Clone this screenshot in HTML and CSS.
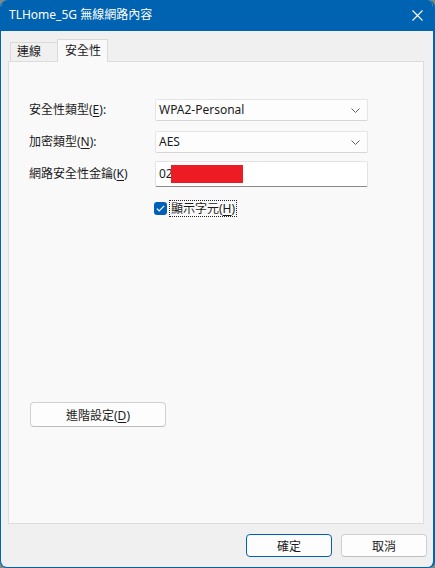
FILE: index.html
```html
<!DOCTYPE html>
<html lang="zh-Hant">
<head>
    <meta charset="UTF-8">
    <meta name="viewport" content="width=device-width, initial-scale=1.0">
    <title>TLHome_5G 無線網路內容</title>
    <link rel="stylesheet" href="styles.css">
</head>
<body>
<div class="window">
    <div class="titlebar">
        <span class="title">TLHome_5G 無線網路內容</span>
        <svg class="close" width="11" height="11" viewBox="0 0 11 11">
            <path d="M0.5 0.5 L10.5 10.5 M10.5 0.5 L0.5 10.5" stroke="#fff" stroke-width="1.1" fill="none"/>
        </svg>
    </div>

    <div class="main">
        <div class="tabs">
            <div class="tab">連線</div>
            <div class="tab active">安全性</div>
        </div>

        <div class="panel">
            <div class="row row-first">
                <label class="label">安全性類型(<u>E</u>):</label>
                <div class="select">
                    <span>WPA2-Personal</span>
                    <svg class="chevron" width="9" height="5" viewBox="0 0 9 5"><path d="M0.5 0.5 L4.5 4.5 L8.5 0.5" stroke="#5f5f5f" fill="none"/></svg>
                </div>
            </div>
            <div class="row row-second">
                <label class="label">加密類型(<u>N</u>):</label>
                <div class="select">
                    <span>AES</span>
                    <svg class="chevron" width="9" height="5" viewBox="0 0 9 5"><path d="M0.5 0.5 L4.5 4.5 L8.5 0.5" stroke="#5f5f5f" fill="none"/></svg>
                </div>
            </div>
            <div class="row row-third">
                <label class="label">網路安全性金鑰(<u>K</u>)</label>
                <div class="input">
                    <span>02</span><span class="redact"></span>
                </div>
            </div>
            <div class="check-row">
                <span class="checkbox">
                    <svg width="9" height="7" viewBox="0 0 9 7"><path d="M0.8 3.6 L3.2 5.9 L8.2 0.9" stroke="#fff" stroke-width="1.2" fill="none"/></svg>
                </span>
                <span class="check-label">顯示字元(<u>H</u>)</span>
            </div>

            <button class="btn advanced">進階設定(<u>D</u>)</button>
        </div>
    </div>

    <div class="footer">
        <button class="btn default">確定</button>
        <button class="btn">取消</button>
    </div>
</div>
</body>
</html>
```

FILE: styles.css
```css
html, body {
    margin: 0;
    padding: 0;
    background: #7f8a80;
}
body {
    font-family: "Noto Sans", "Noto Sans CJK TC", sans-serif;
    font-size: 12px;
    line-height: 16px;
    color: #1b1b1b;
}
u {
    text-decoration: underline;
    text-underline-offset: 2px;
}

.window {
    width: 435px;
    height: 568px;
    box-sizing: border-box;
    background: #f0f0f0;
    border-left: 1px solid #0063b1;
    border-right: 2px solid #0063b1;
    border-bottom: 1px solid #0063b1;
    border-radius: 7px;
    overflow: hidden;
    display: flex;
    flex-direction: column;
}

.titlebar {
    height: 31px;
    flex: none;
    background: #0063b1;
    color: #fff;
    display: flex;
    align-items: center;
    justify-content: space-between;
    padding: 0 10px 0 8px;
}
.title {
    font-size: 12px;
    margin-top: -1px;
}
.close {
    display: block;
}

.main {
    flex: 1;
    padding: 8px 9px 0 7px;
    display: flex;
    flex-direction: column;
}

.tabs {
    display: flex;
    align-items: flex-end;
    height: 22px;
    margin-left: 2px;
    position: relative;
    z-index: 1;
}
.tab {
    height: 19px;
    box-sizing: border-box;
    width: 48px;
    border: 1px solid #dadada;
    border-bottom: none;
    background: #f0f0f0;
    padding-left: 6px;
    line-height: 18px;
    font-size: 12px;
}
.tab.active {
    height: 23px;
    width: 51px;
    margin-left: -1px;
    margin-bottom: -1px;
    background: #f9f9f9;
    padding-left: 7px;
    line-height: 22px;
}

.panel {
    height: 463px;
    box-sizing: border-box;
    border: 1px solid #dcdcdc;
    background: #f9f9f9;
    padding: 37px 0 96px 20px;
    display: flex;
    flex-direction: column;
}

.row {
    display: flex;
    align-items: center;
}
.row-second {
    margin-top: 10px;
}
.row-third {
    margin-top: 8px;
}
.label {
    width: 126px;
    flex: none;
}

.select {
    width: 213px;
    height: 22px;
    box-sizing: border-box;
    background: #fdfdfd;
    border: 1px solid #e5e5e5;
    border-bottom-color: #d6d6d6;
    border-radius: 2px;
    display: flex;
    align-items: center;
    justify-content: space-between;
    padding: 0 7px 0 3px;
    font-size: 12px;
}
.chevron {
    display: block;
}

.input {
    width: 213px;
    height: 26px;
    box-sizing: border-box;
    background: #fff;
    border: 1px solid #e3e3e3;
    border-bottom: 1px solid #8a8a8a;
    border-radius: 2px;
    display: flex;
    align-items: center;
    padding-left: 3px;
    font-size: 12px;
}
.redact {
    display: inline-block;
    width: 72px;
    height: 18px;
    margin-left: -2px;
    background: #ed1c24;
}

.check-row {
    display: flex;
    align-items: center;
    margin: 13px 0 0 125px;
    height: 17px;
}
.checkbox {
    width: 13px;
    height: 13px;
    border-radius: 3px;
    background: #005fb8;
    display: flex;
    align-items: center;
    justify-content: center;
}
.checkbox svg {
    display: block;
}
.check-label {
    margin-left: 2px;
    border: 1px dotted #222;
    padding: 0 1px;
    height: 15px;
    line-height: 15px;
}

.btn {
    font-family: "Noto Sans", "Noto Sans CJK TC", sans-serif;
    font-size: 12px;
    color: #1b1b1b;
    background: #fdfdfd;
    border: 1px solid #d0d0d0;
    border-bottom-color: #bdbdbd;
    border-radius: 4px;
    padding: 0;
    cursor: pointer;
}
.advanced {
    margin-top: auto;
    margin-left: 1px;
    width: 136px;
    height: 25px;
}

.footer {
    height: 43px;
    flex: none;
    display: flex;
    justify-content: flex-end;
    gap: 9px;
    padding: 10px 6px 0 0;
    box-sizing: border-box;
}
.footer .btn {
    width: 86px;
    height: 23px;
}
.footer .btn.default {
    border-color: #005fb8;
}
```
